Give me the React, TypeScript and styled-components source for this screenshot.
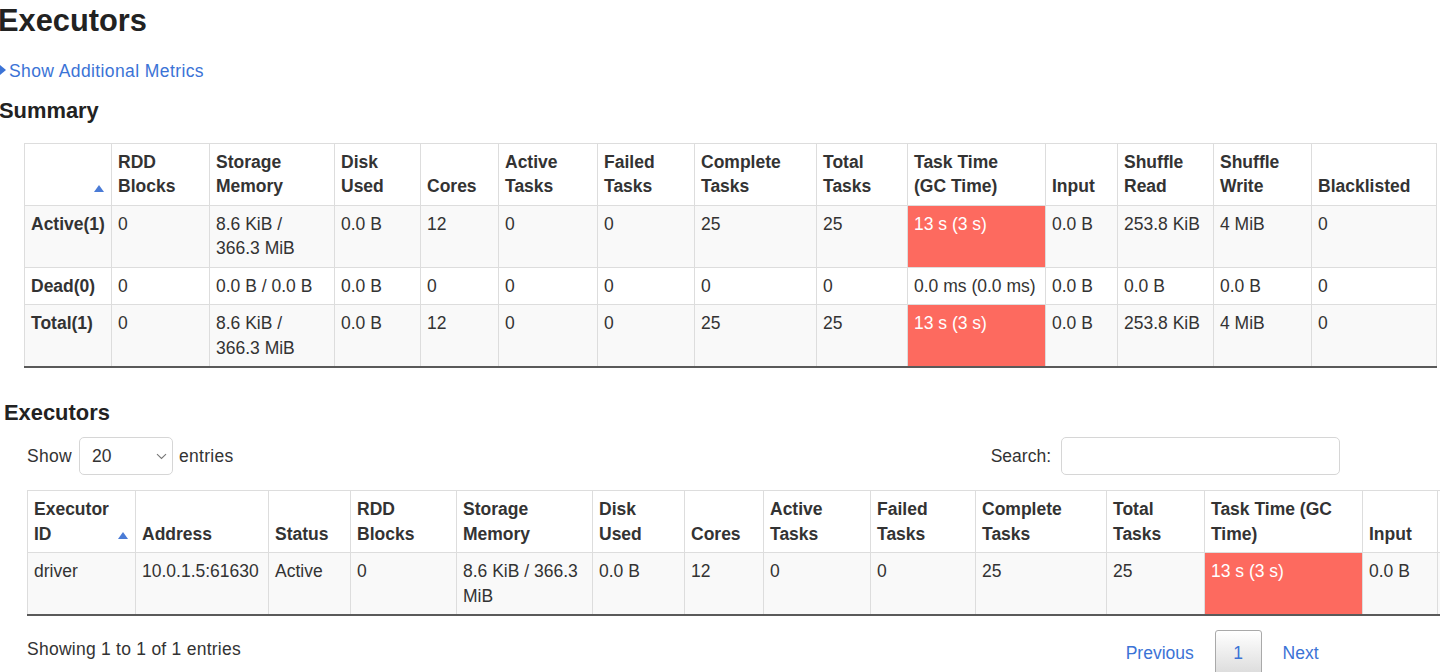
import React from "react";
import styled, { createGlobalStyle } from "styled-components";

const GlobalStyle = createGlobalStyle`
  html, body {
    margin: 0;
    padding: 0;
    overflow: hidden;
    background: #fff;
  }
  body {
    font-family: "Liberation Sans", Arial, Helvetica, sans-serif;
    font-size: 17.5px;
    line-height: 24.5px;
    color: #333;
  }
`;

const BLUE = "#3b73d6";

type Cell = { text: string; hot?: boolean };

// header labels use \n where the original page breaks the line
const summaryCols = [
  { label: "", width: 87, sorted: true },
  { label: "RDD Blocks", width: 98 },
  { label: "Storage Memory", width: 125 },
  { label: "Disk Used", width: 86 },
  { label: "Cores", width: 78 },
  { label: "Active Tasks", width: 99 },
  { label: "Failed Tasks", width: 97 },
  { label: "Complete Tasks", width: 122 },
  { label: "Total Tasks", width: 91 },
  { label: "Task Time\n(GC Time)", width: 138 },
  { label: "Input", width: 72 },
  { label: "Shuffle Read", width: 96 },
  { label: "Shuffle Write", width: 98 },
  { label: "Blacklisted", width: 125 },
];

const summaryRows: Cell[][] = [
  [
    { text: "Active(1)" }, { text: "0" }, { text: "8.6 KiB / 366.3 MiB" }, { text: "0.0 B" },
    { text: "12" }, { text: "0" }, { text: "0" }, { text: "25" }, { text: "25" },
    { text: "13 s (3 s)", hot: true }, { text: "0.0 B" }, { text: "253.8 KiB" }, { text: "4 MiB" }, { text: "0" },
  ],
  [
    { text: "Dead(0)" }, { text: "0" }, { text: "0.0 B / 0.0 B" }, { text: "0.0 B" },
    { text: "0" }, { text: "0" }, { text: "0" }, { text: "0" }, { text: "0" },
    { text: "0.0 ms (0.0 ms)" }, { text: "0.0 B" }, { text: "0.0 B" }, { text: "0.0 B" }, { text: "0" },
  ],
  [
    { text: "Total(1)" }, { text: "0" }, { text: "8.6 KiB / 366.3 MiB" }, { text: "0.0 B" },
    { text: "12" }, { text: "0" }, { text: "0" }, { text: "25" }, { text: "25" },
    { text: "13 s (3 s)", hot: true }, { text: "0.0 B" }, { text: "253.8 KiB" }, { text: "4 MiB" }, { text: "0" },
  ],
];

const executorCols = [
  { label: "Executor ID", width: 108, sorted: true },
  { label: "Address", width: 133 },
  { label: "Status", width: 82 },
  { label: "RDD Blocks", width: 106 },
  { label: "Storage Memory", width: 136 },
  { label: "Disk Used", width: 92 },
  { label: "Cores", width: 79 },
  { label: "Active Tasks", width: 107 },
  { label: "Failed Tasks", width: 105 },
  { label: "Complete Tasks", width: 131 },
  { label: "Total Tasks", width: 98 },
  { label: "Task Time (GC Time)", width: 158 },
  { label: "Input", width: 75 },
  { label: "Shuffle Read", width: 110 },
  { label: "Shuffle Write", width: 110 },
  { label: "Logs", width: 90 },
  { label: "Thread Dump", width: 120 },
];

const executorRows: Cell[][] = [
  [
    { text: "driver" }, { text: "10.0.1.5:61630" }, { text: "Active" }, { text: "0" },
    { text: "8.6 KiB / 366.3 MiB" }, { text: "0.0 B" }, { text: "12" }, { text: "0" }, { text: "0" },
    { text: "25" }, { text: "25" }, { text: "13 s (3 s)", hot: true }, { text: "0.0 B" },
    { text: "253.8 KiB" }, { text: "4 MiB" }, { text: "" }, { text: "Thread Dump" },
  ],
];

const Page = styled.div`
  padding-top: 4px;
`;

const Title = styled.h1`
  margin: 0 0 0 -2px;
  font-size: 30.8px;
  line-height: 34px;
  font-weight: bold;
  color: #222;
`;

const Toggle = styled.a`
  display: flex;
  align-items: center;
  gap: 3px;
  margin-top: 21px;
  color: ${BLUE};
  text-decoration: none;
  letter-spacing: 0.4px;
  cursor: pointer;
`;

const Arrow = styled.span`
  width: 0;
  height: 0;
  border-left: 6px solid ${BLUE};
  border-top: 5px solid transparent;
  border-bottom: 5px solid transparent;
  transform: translateY(-1px);
`;

const SectionTitle = styled.h4<{ $indent: number; $top: number }>`
  margin: ${(p) => p.$top}px 0 0 ${(p) => p.$indent}px;
  font-size: 21.9px;
  line-height: 25px;
  font-weight: bold;
  color: #222;
`;

const Table = styled.table<{ $indent: number }>`
  margin-left: ${(p) => p.$indent}px;
  border-collapse: collapse;
  table-layout: fixed;
  width: max-content;

  th,
  td {
    border: 1px solid #ddd;
    padding: 6px;
    text-align: left;
    line-height: 24.5px;
    box-sizing: border-box;
    overflow: hidden;
  }

  th {
    vertical-align: bottom;
    font-weight: bold;
    color: #333;
    background: #fff;
    white-space: pre-line;
  }

  td {
    vertical-align: top;
  }

  tbody tr:nth-child(odd) td {
    background: #f9f9f9;
  }

  tbody tr:last-child td {
    border-bottom: 2px solid #5a5a5a;
  }
`;

const HeadCell = styled.th<{ $sorted?: boolean }>`
  position: relative;
  padding-right: ${(p) => (p.$sorted ? 20 : 6)}px !important;

  &::after {
    content: "";
    display: ${(p) => (p.$sorted ? "block" : "none")};
    position: absolute;
    right: 7px;
    bottom: 13px;
    width: 0;
    height: 0;
    border-left: 5px solid transparent;
    border-right: 5px solid transparent;
    border-bottom: 7px solid #4a7bd6;
  }
`;

const DataCell = styled.td<{ $hot?: boolean; $label?: boolean }>`
  font-weight: ${(p) => (p.$label ? "bold" : "normal")};
  color: #333;

  &&&[data-hot="true"] {
    background: #fd6a5f;
    color: #fff;
  }
`;

const Wrapper = styled.div`
  margin-left: 27px;
  width: 1313px;
`;

const Controls = styled.div`
  display: flex;
  justify-content: space-between;
  align-items: center;
  margin-top: 12px;
  height: 38px;
`;

const Group = styled.label`
  display: flex;
  align-items: center;
`;

const Caption = styled.span`
  letter-spacing: 0.3px;
`;

const SelectBox = styled.div`
  display: flex;
  align-items: center;
  justify-content: space-between;
  box-sizing: border-box;
  width: 94px;
  height: 38px;
  margin: 0 6px 0 7px;
  padding: 0 5px 0 12px;
  border: 1px solid #d6d6d6;
  border-radius: 5px;
  background: #fff;
  color: #333;
`;

const SearchInput = styled.input`
  box-sizing: border-box;
  width: 279px;
  height: 38px;
  margin-left: 10px;
  border: 1px solid #d6d6d6;
  border-radius: 5px;
  font: inherit;
  padding: 0 8px;
  outline: none;
`;

const TableArea = styled.div`
  margin-top: 15px;
`;

const Footer = styled.div`
  display: flex;
  justify-content: space-between;
  align-items: flex-start;
  margin-top: 14px;
`;

const Info = styled.div`
  padding-top: 7px;
  letter-spacing: 0.25px;
`;

const Pager = styled.div`
  display: flex;
  margin-right: 3px;
`;

const PageButton = styled.a<{ $current?: boolean }>`
  display: block;
  min-width: 1.5em;
  box-sizing: border-box;
  text-align: center;
  padding: 10px 17.5px 8px;
  margin-left: 2.5px;
  border: 1px solid ${(p) => (p.$current ? "#a9a9a9" : "transparent")};
  border-radius: 3px;
  color: ${BLUE};
  text-decoration: none;
  background: ${(p) =>
    p.$current ? "linear-gradient(to bottom, #ffffff 0%, #dcdcdc 100%)" : "transparent"};
  cursor: pointer;
`;

function Chevron() {
  return (
    <svg width="11" height="7" viewBox="0 0 11 7">
      <path d="M1 1.2 L5.5 5.5 L10 1.2" fill="none" stroke="#777" strokeWidth="1.1" />
    </svg>
  );
}

function DataTable({
  cols,
  rows,
  indent,
  labelFirst,
}: {
  cols: { label: string; width: number; sorted?: boolean }[];
  rows: Cell[][];
  indent: number;
  labelFirst?: boolean;
}) {
  return (
    <Table $indent={indent}>
      <colgroup>
        {cols.map((c, i) => (
          <col key={i} style={{ width: c.width }} />
        ))}
      </colgroup>
      <thead>
        <tr>
          {cols.map((c, i) => (
            <HeadCell key={i} $sorted={c.sorted}>
              {c.label}
            </HeadCell>
          ))}
        </tr>
      </thead>
      <tbody>
        {rows.map((r, ri) => (
          <tr key={ri}>
            {r.map((cell, ci) => (
              <DataCell
                key={ci}
                data-hot={cell.hot ? "true" : undefined}
                $label={labelFirst && ci === 0}
              >
                {cell.text}
              </DataCell>
            ))}
          </tr>
        ))}
      </tbody>
    </Table>
  );
}

export default function App() {
  return (
    <Page>
      <GlobalStyle />
      <Title>Executors</Title>
      <Toggle>
        <Arrow />
        Show Additional Metrics
      </Toggle>
      <SectionTitle $indent={-1} $top={14}>
        Summary
      </SectionTitle>
      <div style={{ marginTop: 20 }}>
        <DataTable cols={summaryCols} rows={summaryRows} indent={24} labelFirst />
      </div>

      <SectionTitle $indent={4} $top={32}>
        Executors
      </SectionTitle>
      <Wrapper>
        <Controls>
          <Group>
            <Caption>Show</Caption>
            <SelectBox>
              <span>20</span>
              <Chevron />
            </SelectBox>
            <Caption>entries</Caption>
          </Group>
          <Group>
            Search:
            <SearchInput type="search" />
          </Group>
        </Controls>
        <TableArea>
          <DataTable cols={executorCols} rows={executorRows} indent={0} />
        </TableArea>
        <Footer>
          <Info>Showing 1 to 1 of 1 entries</Info>
          <Pager>
            <PageButton>Previous</PageButton>
            <PageButton $current>1</PageButton>
            <PageButton>Next</PageButton>
          </Pager>
        </Footer>
      </Wrapper>
    </Page>
  );
}
